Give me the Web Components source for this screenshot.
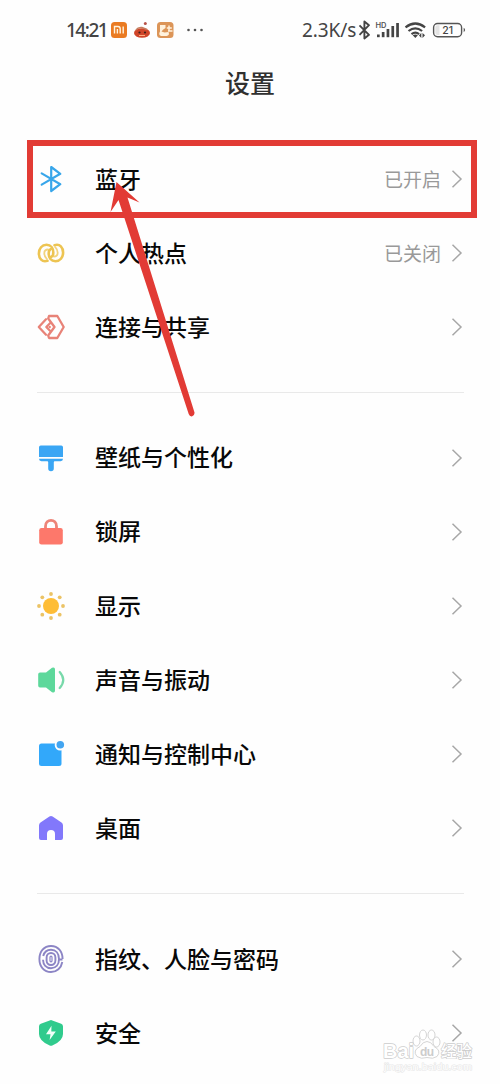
<!DOCTYPE html>
<html lang="zh-CN">
<head>
<meta charset="utf-8">
<title>设置</title>
<style>
html,body{margin:0;height:1084px;overflow:hidden;background:#fefefe}
body{font-family:"Noto Sans CJK SC",sans-serif}
</style>
</head>
<body>
<settings-screen></settings-screen>
<script>
const icons={
bluetooth:`<g fill="none" stroke="#38a6ea" stroke-width="2.200" stroke-linejoin="round" stroke-linecap="round"><path d="M5.700 9.400 24.300 20.200 15.200 27V3l9.100 6.800L5.700 20.600"/></g>`,
hotspot:`<g fill="none" stroke="#edc452" stroke-width="2.600" stroke-linecap="round"><path d="M11.500 22.800C6 24.500 2.900 20.500 2.900 15.500 2.900 10.500 6 6.800 10.500 6.800 15 6.800 17.300 10 17.300 14.500 17.300 16.800 16.600 18.300 15.300 18.800"/><path d="M18.500 7.200C24 5.500 27.100 9.500 27.100 14.500 27.100 19.500 24 23.200 19.500 23.200 15 23.200 12.700 20 12.700 15.500 12.700 13.200 13.400 11.700 14.700 11.200"/><path d="M12 11.500Q8.300 11.500 8.300 15.200 8.300 18.500 10.800 20.800M18 18.500Q21.700 18.500 21.700 14.800 21.700 11.500 19.200 9.200" stroke-width="1.800" opacity=".75"/></g>`,
share:`<g fill="none" stroke="#e88378" stroke-width="2.300" stroke-linejoin="round" stroke-linecap="round"><path d="M10 7.300 2.800 15 10 22.700M14 11.200 10.300 15l3.700 3.800"/><path d="M13 4h8.300L27.700 15l-6.400 11H13l-.8-2.500L18.500 15 12.200 6.500z"/></g><circle cx="13.700" cy="15" r="1.200" fill="#e88378"/>`,
brush:`<path fill="#3aa6f4" d="M4.800 2.500h20.400Q27 2.500 27 4.300V14H3V4.300Q3 2.500 4.800 2.500M3 15.800h24Q27 18.200 24.600 18.200h-6.300l-.5 1V25.500a2.800 2.800 0 0 1-5.600 0V19.200l-.5-1H5.400Q3 18.200 3 15.800"/>`,
lock:`<path fill="none" stroke="#ed8478" stroke-width="2.800" d="M9.500 13V9.200C9.500 1.300 20.500 1.300 20.500 9.200V13"/><rect x="3.200" y="11" width="23.600" height="16.500" rx="2.300" fill="#fd786b"/>`,
sun:`<circle cx="15" cy="15" r="8" fill="#febd36"/><g fill="#ebc365"><circle cx="15" cy="3" r="1.900"/><circle cx="23.700" cy="6.300" r="1.900"/><circle cx="27" cy="15" r="1.900"/><circle cx="23.700" cy="23.700" r="1.900"/><circle cx="15" cy="27" r="1.900"/><circle cx="6.300" cy="23.700" r="1.900"/><circle cx="3" cy="15" r="1.900"/><circle cx="6.300" cy="6.300" r="1.900"/></g>`,
sound:`<path fill="#5dd89b" d="M4 7.500h6l6-4.700Q19 1.500 19 4.500V25.500Q19 28.500 16 27.200L10 22.500H4Q2.200 22.500 2.200 20.700V9.300Q2.200 7.500 4 7.500"/><path d="M23.700 7Q30.800 15 23.700 23" fill="none" stroke="#78d9aa" stroke-width="2.200" stroke-linecap="round"/>`,
notice:`<rect x="3" y="4.500" width="22.500" height="22.500" rx="2.500" fill="#32a8fa"/><circle cx="24.200" cy="6" r="5.500" fill="#fefefe"/><circle cx="24.300" cy="5.800" r="3.800" fill="#43a5f1"/>`,
home:`<path fill="#8278fb" d="M13.400 3.500Q15 2.500 16.600 3.500L25.500 9.500Q27 10.600 27 12.500V25Q27 27 25 27H19V21a4 4 0 0 0-8 0V27H5Q3 27 3 25V12.500Q3 10.600 4.500 9.500z"/>`,
finger:`<g fill="none" stroke="#8c85c5" stroke-width="1.900"><path d="M26.300 18C25.200 24 20.800 28 15 28 8 28 3.400 22.500 3.400 15S8 2 15 2s11.600 5.500 11.600 13"/><path d="M7.200 12C8.200 8 11 5.700 15 5.700c5 0 8 3.700 8 9.300s-3 9.300-8 9.300c-4.800 0-7.800-3.500-8-8.500M22.500 15.500h4"/><rect x="10.600" y="9" width="8.800" height="12" rx="4.400"/><rect x="14" y="12.200" width="2" height="5.600" rx="1" stroke-width="1.200"/></g>`,
shield:`<path fill="#30cb8d" d="M13.700 2.500Q15 1.700 16.300 2.500L25.200 5.700Q27 6.500 27 8.500V16Q27 23 16.300 27.500 15 28.100 13.700 27.500 3 23 3 16V8.500Q3 6.500 4.800 5.700z"/><path fill="#f2fff8" d="M15.500 7.700 10 16.200h4.500L13.600 22l6.200-8.500h-4.500z"/>`
};
class PhoneElement extends HTMLElement{
  constructor(){super();this.attachShadow({mode:"open"})}
  connectedCallback(){this.shadowRoot.innerHTML=this.render()}
}
customElements.define("settings-icon",class extends PhoneElement{
  render(){return `<style>:host{display:block;width:30px;height:30px}svg{display:block}</style><svg width="30" height="30" viewBox="0 0 30 30">${icons[this.getAttribute("name")]}</svg>`}
});
customElements.define("settings-row",class extends PhoneElement{
  render(){return `<style>:host{display:flex;align-items:center;height:74.120px;padding:0 36px;box-sizing:border-box;color:#080808}
  .label{margin-left:29px;padding-bottom:3px;font-size:23px;line-height:34px;font-weight:500;flex:1;white-space:nowrap}
  .value{color:#999;font-size:19px;line-height:28px;margin-right:10px;padding-bottom:1px}svg{display:block;margin-right:1px}</style>
  <settings-icon name="${this.getAttribute("icon")}"></settings-icon><span class="label"><slot></slot></span><span class="value"><slot name="value"></slot></span>
  <svg width="12" height="20" viewBox="0 0 12 20"><path d="M1.500 1.800 10 10l-8.500 8.200" fill="none" stroke="#a7a7a7" stroke-width="1.500"/></svg>`}
});
customElements.define("settings-group",class extends PhoneElement{
  render(){return `<style>:host{display:block}:host([divided])::before{content:"";display:block;height:1px;margin:27.500px 36px 28px 37px;background:#e9e9e9}</style><slot></slot>`}
});
customElements.define("status-bar",class extends PhoneElement{
  render(){return `<style>:host{display:flex;box-sizing:border-box;height:60px;padding:0 34px 0 66px;align-items:center;font:500 19px/24px "Noto Sans",sans-serif;color:#444}
  svg{display:block;overflow:visible}.time{width:41px;letter-spacing:-1.500px}.speed{margin-left:auto;width:56px;font-weight:400;letter-spacing:-.1px;white-space:nowrap}text{font-family:Inter,"Liberation Sans",sans-serif}</style>
  <span class="time">14:21</span>
  <svg width="100" height="24" viewBox="107 18 100 24">
   <rect x="111" y="22" width="16" height="16" rx="3.500" fill="#ea7b22"/><path d="M114.500 33.500v-7h3.500q2.200 0 2.200 2.200v4.800M117.400 29v4.500M123.200 26.500v7" fill="none" stroke="#fff4df" stroke-width="1.400"/>
   <ellipse cx="142" cy="33" rx="8" ry="4.800" fill="#cf4428"/><path d="M136 30q2-3 6-2.500l5 2" stroke="#c57d5e" stroke-width="1.500" fill="none"/><circle cx="145.300" cy="23.500" r="1.500" fill="#b75248"/><circle cx="139.500" cy="32.500" r="1.100" fill="#3d211b"/><circle cx="145" cy="32.500" r="1.100" fill="#3d211b"/><path d="M139 35.500h6" stroke="#ffac80" stroke-width="1"/>
   <rect x="157" y="22" width="16.500" height="16" rx="3.500" fill="#dc9558"/><path d="M160 25h5.500v3q-3 1.500-4 3.500l3 1 4-.5q1.500 3.500-2 4h-5.500q-3-1.500-1-4.500z" fill="#fff2dd"/><path d="M169 25.500v5.500M166.800 28h5M168 31h4.500" fill="none" stroke="#fff2dd" stroke-width="1.500"/>
   <g fill="#555"><circle cx="188.500" cy="30" r="1.300"/><circle cx="195" cy="30" r="1.300"/><circle cx="201.500" cy="30" r="1.300"/></g>
  </svg>
  <span class="speed">2.3K/s</span>
  <svg width="108" height="24" viewBox="358 18 108 24">
   <path d="M359.500 25.300 369 34.800 364.400 38.500V21.500l4.600 3.700-9.500 9.600" fill="none" stroke="#444" stroke-width="1.900" stroke-linejoin="round"/>
   <text x="375.500" y="28" font-size="7.500" font-weight="600" fill="#555">HD</text>
   <g fill="#444"><rect x="377" y="34.500" width="2.700" height="2.700"/><rect x="381.800" y="32" width="2.700" height="5.200"/><rect x="386.600" y="29" width="2.700" height="8.200"/><rect x="391.400" y="26" width="2.700" height="11.200"/><rect x="396.200" y="23" width="2.700" height="14.200"/></g>
   <g fill="none" stroke="#444" stroke-width="2.200"><path d="M405.500 27.300q9.800-7.600 19.600 0M408.500 31q6.800-5.400 13.600 0M411.500 34.200q3.900-3 7.600 0"/></g><path d="m412.700 35.200 2.600 2.800 2.600-2.800q-2.600-1.500-5.200 0" fill="#444"/><path d="m419 35.500 2.300-2.800V38zM422.500 33v5l2.500-2.800z" fill="#444"/>
   <rect x="433.600" y="23.500" width="28" height="13.200" rx="4" fill="none" stroke="#555" stroke-width="1.400"/><path d="M437.500 25.200h2v9.800h-2q-2.200 0-2.200-2.200v-5.400q0-2.200 2.200-2.200" fill="#e4e4e4"/><path d="M463.700 27.800q2.800 2.200 0 4.400z" fill="#555"/><text x="447.600" y="34" font-size="10.500" text-anchor="middle" fill="#444">21</text>
  </svg>`}
});
customElements.define("pointer-mark",class extends PhoneElement{
  render(){return `<style>:host{position:absolute;inset:0;pointer-events:none}svg{display:block}</style><svg width="500" height="1084"><rect x="30" y="143" width="444" height="72" fill="none" stroke="#e23b35" stroke-width="6"/><path d="M116.500 182 139.500 202.500 127.500 197.500 194.500 412.500Q194.800 415.500 192.200 416.300 189.700 416.800 188.700 414L118.500 200 110.500 212z" fill="#e23b35"/></svg>`}
});
customElements.define("brand-watermark",class extends PhoneElement{
  render(){return `<style>:host{position:absolute;left:378px;top:1024px}svg{display:block}text{font-family:"Liberation Sans","Noto Sans CJK SC",sans-serif;paint-order:stroke;stroke:#ccc;stroke-width:1.400px;fill:#fff;stroke-linejoin:round}</style>
  <svg width="100" height="54" viewBox="378 1024 100 54"><g fill="#fff" stroke="#d5d5d5" stroke-width="1"><path d="M417 1056.500q-5-6 3-10 3-5 7-5t7 5q8 4 3 10-4 3-10 1-6 2-10-1"/><ellipse cx="416.500" cy="1041" rx="3.500" ry="5"/><ellipse cx="423" cy="1035" rx="3.500" ry="5"/><ellipse cx="431.500" cy="1035" rx="3.500" ry="5"/><ellipse cx="436.500" cy="1042" rx="3.500" ry="5"/></g><text x="383" y="1058" font-size="20" font-weight="700" textLength="31" lengthAdjust="spacingAndGlyphs">Bai</text><text x="420" y="1056" font-size="12" font-weight="700" textLength="14" style="stroke:none;fill:#ccc">du</text><text x="441" y="1057" font-size="15.500" font-weight="500" textLength="31" font-family="Noto Sans CJK SC">经验</text><text x="384" y="1070" font-size="9.500" textLength="88" lengthAdjust="spacingAndGlyphs" style="stroke:#e5e5e5;stroke-width:1px">jingyan.baidu.com</text></svg>`}
});
customElements.define("settings-screen",class extends PhoneElement{
  render(){return `<style>:host{display:block;position:relative;width:500px;height:1084px;overflow:hidden;background:#fefefe}h1{height:82px;margin:0;text-align:center;font-size:25px;line-height:44px;font-weight:500;color:#303030}</style>
  <status-bar></status-bar><h1>设置</h1>
  <settings-group><settings-row icon="bluetooth">蓝牙<span slot="value">已开启</span></settings-row><settings-row icon="hotspot">个人热点<span slot="value">已关闭</span></settings-row><settings-row icon="share">连接与共享</settings-row></settings-group>
  <settings-group divided><settings-row icon="brush">壁纸与个性化</settings-row><settings-row icon="lock">锁屏</settings-row><settings-row icon="sun">显示</settings-row><settings-row icon="sound">声音与振动</settings-row><settings-row icon="notice">通知与控制中心</settings-row><settings-row icon="home">桌面</settings-row></settings-group>
  <settings-group divided><settings-row icon="finger">指纹、人脸与密码</settings-row><settings-row icon="shield">安全</settings-row></settings-group>
  <brand-watermark></brand-watermark><pointer-mark></pointer-mark>`}
});
</script>
</body>
</html>
